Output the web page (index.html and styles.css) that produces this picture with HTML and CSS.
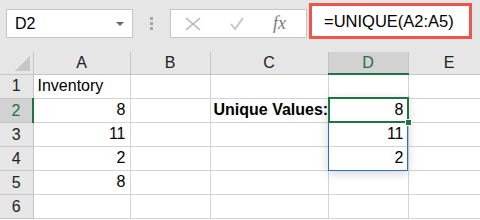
FILE: index.html
```html
<!DOCTYPE html>
<html lang="en">
<head>
    <meta charset="UTF-8">
    <title>UNIQUE</title>
    <link rel="stylesheet" href="styles.css">
</head>
<body>
    <div class="toolbar">
        <div class="name-box">
            <span>D2</span>
            <svg class="caret" width="8" height="4" viewBox="0 0 8 4"><path d="M0 0h8L4 4z" fill="#6d6d6d"/></svg>
        </div>
        <div class="grip"><i></i><i></i><i></i></div>
        <div class="fx-buttons">
            <svg width="16" height="14" viewBox="0 0 16 14"><path d="M1 1l14 12M15 1L1 13" stroke="#b4b4b4" stroke-width="1.6" fill="none"/></svg>
            <svg class="check" width="14" height="14" viewBox="0 0 14 14"><path d="M1 7l4 5L13 1" stroke="#c8c8c8" stroke-width="2" fill="none"/></svg>
            <span class="fx">fx</span>
        </div>
        <div class="formula">=UNIQUE(A2:A5)</div>
    </div>

    <table class="sheet">
        <colgroup>
            <col class="c-head"><col class="c-a"><col class="c-b"><col class="c-c"><col class="c-d"><col class="c-e">
        </colgroup>
        <tr class="col-heads">
            <th class="corner"><span class="tri"></span></th>
            <th>A</th><th>B</th><th>C</th><th class="active-col">D</th><th>E</th>
        </tr>
        <tr>
            <th>1</th><td>Inventory</td><td></td><td></td><td></td><td></td>
        </tr>
        <tr>
            <th class="active-row">2</th><td class="num">8</td><td></td>
            <td class="label">Unique Values:</td>
            <td class="num selected">8<div class="spill"></div><div class="cursor"></div><div class="handle"></div></td>
            <td></td>
        </tr>
        <tr>
            <th>3</th><td class="num">11</td><td></td><td></td><td class="num">11</td><td></td>
        </tr>
        <tr>
            <th>4</th><td class="num">2</td><td></td><td></td><td class="num">2</td><td></td>
        </tr>
        <tr>
            <th>5</th><td class="num">8</td><td></td><td></td><td></td><td></td>
        </tr>
        <tr>
            <th>6</th><td></td><td></td><td></td><td></td><td></td>
        </tr>
    </table>
</body>
</html>
```

FILE: styles.css
```css
body {
    margin: 0;
    width: 480px;
    height: 220px;
    overflow: hidden;
    background-color: #fff;
    font-family: 'Liberation Sans', Arial, sans-serif;
    color: #000;
}
.toolbar {
    display: flex;
    align-items: flex-start;
    height: 52px;
    background-color: #e6e6e6;
}
.name-box {
    display: flex;
    align-items: center;
    justify-content: space-between;
    box-sizing: border-box;
    width: 127px;
    height: 29px;
    margin: 9px 0 0 6px;
    padding: 0 8px 0 8px;
    background-color: #fff;
    border: 1px solid #c6c6c6;
    font-size: 16px;
}
.grip {
    display: flex;
    flex-direction: column;
    gap: 2px;
    margin: 17px 0 0 17px;
}
.grip i {
    display: block;
    width: 3px;
    height: 3px;
    background-color: #a6a6a6;
}
.fx-buttons {
    display: flex;
    align-items: center;
    box-sizing: border-box;
    width: 137px;
    height: 29px;
    margin: 9px 0 0 17px;
    padding-left: 14px;
    background-color: #fff;
    border: 1px solid #c6c6c6;
}
.fx-buttons .check {
    margin-left: 29px;
}
.fx {
    margin-left: 29px;
    font-family: 'Liberation Serif', serif;
    font-style: italic;
    font-size: 18px;
    color: #7a7a7a;
}
.formula {
    box-sizing: border-box;
    width: 163px;
    height: 36px;
    margin: 3px 0 0 2px;
    padding: 6px 0 0 12px;
    background-color: #fff;
    border: 3px solid #f0544a;
    font-size: 16.5px;
}
.sheet {
    border-collapse: collapse;
    table-layout: fixed;
    width: 490px;
    font-size: 16px;
}
.c-head { width: 33px; }
.c-a { width: 97px; }
.c-b { width: 80px; }
.c-c { width: 118px; }
.c-d { width: 80px; }
.c-e { width: 82px; }
.sheet th {
    background-color: #e6e6e6;
    font-weight: normal;
    border: 1px solid #c4c4c4;
    padding: 0;
    color: #222;
}
.col-heads th {
    height: 21px;
    border-top: none;
}
.sheet tr th:first-child {
    border-left: none;
}
.sheet td {
    height: 20px;
    padding: 0 4px 3px 4px;
    border: 1px solid #d4d4d4;
    vertical-align: bottom;
    white-space: nowrap;
    line-height: 18px;
}
.corner {
    position: relative;
}
.tri {
    position: absolute;
    right: 3px;
    bottom: 3px;
    width: 0;
    height: 0;
    border-left: 15px solid transparent;
    border-bottom: 15px solid #c6c6c6;
}
.active-col {
    background-color: #d2d2d2 !important;
    border-bottom: 2px solid #217346 !important;
    color: #217346 !important;
}
.active-row {
    background-color: #d2d2d2 !important;
    border-right: 2px solid #217346 !important;
    color: #217346 !important;
}
.num {
    text-align: right;
}
.label {
    font-weight: bold;
    padding-left: 3px !important;
}
.selected {
    position: relative;
}
.spill {
    position: absolute;
    left: -1px;
    top: -1px;
    width: 80px;
    height: 73px;
    box-sizing: border-box;
    border: 1px solid #2e6ad1;
    box-shadow: 0 2px 10px rgba(0,0,0,0.18);
    pointer-events: none;
}
.cursor {
    position: absolute;
    left: -1px;
    top: -2px;
    width: 81px;
    height: 26px;
    box-sizing: border-box;
    border: 2px solid #217346;
}
.handle {
    position: absolute;
    right: -4px;
    bottom: -4px;
    width: 5px;
    height: 5px;
    background-color: #217346;
    border: 1px solid #fff;
}
```
